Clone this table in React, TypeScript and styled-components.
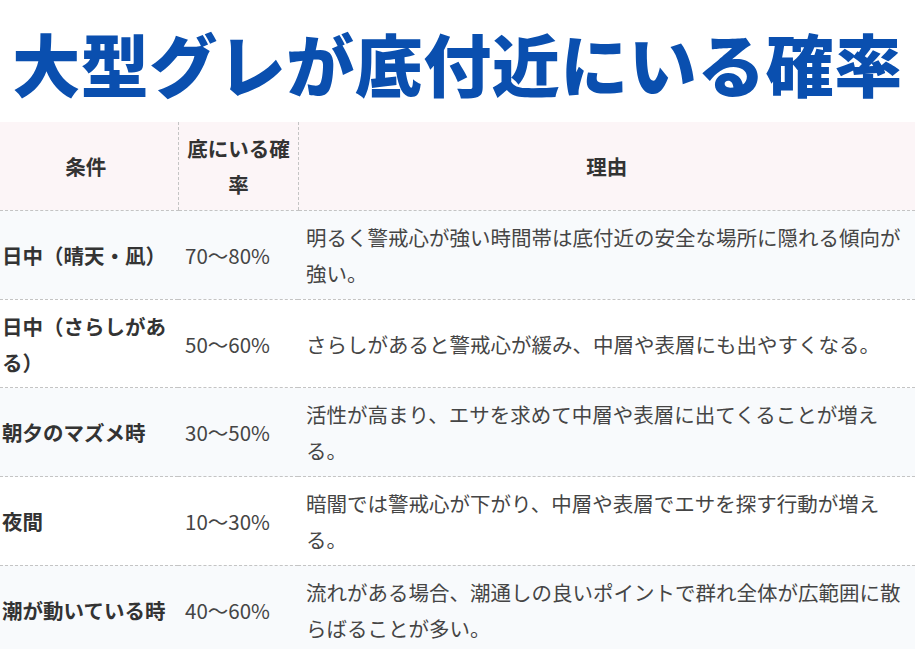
import React from "react";
import styled, { createGlobalStyle } from "styled-components";

const GlobalStyle = createGlobalStyle`
  html, body {
    margin: 0;
    padding: 0;
    background: #ffffff;
    overflow: hidden;
  }
  body {
    font-family: "Noto Sans CJK JP", "Noto Sans", sans-serif;
  }
`;

const rows = [
  {
    cond: "日中（晴天・凪）",
    rate: "70〜80%",
    reason: "明るく警戒心が強い時間帯は底付近の安全な場所に隠れる傾向が強い。",
  },
  {
    cond: "日中（さらしがある）",
    rate: "50〜60%",
    reason: "さらしがあると警戒心が緩み、中層や表層にも出やすくなる。",
  },
  {
    cond: "朝夕のマズメ時",
    rate: "30〜50%",
    reason: "活性が高まり、エサを求めて中層や表層に出てくることが増える。",
  },
  {
    cond: "夜間",
    rate: "10〜30%",
    reason: "暗闇では警戒心が下がり、中層や表層でエサを探す行動が増える。",
  },
  {
    cond: "潮が動いている時",
    rate: "40〜60%",
    reason: "流れがある場合、潮通しの良いポイントで群れ全体が広範囲に散らばることが多い。",
  },
];

export default function App() {
  return (
    <>
      <GlobalStyle />
      <Page>
        <Title>大型グレが底付近にいる確率</Title>
        <Table>
          <colgroup>
            <col style={{ width: 178 }} />
            <col style={{ width: 120 }} />
            <col />
          </colgroup>
          <thead>
            <tr>
              <HeadCell $first>条件</HeadCell>
              <HeadCell $narrow>底にいる確率</HeadCell>
              <HeadCell>理由</HeadCell>
            </tr>
          </thead>
          <tbody>
            {rows.map((r, i) => (
              <Row key={i} $striped={i % 2 === 0}>
                <CondCell>{r.cond}</CondCell>
                <RateCell>{r.rate}</RateCell>
                <ReasonCell>{r.reason}</ReasonCell>
              </Row>
            ))}
          </tbody>
        </Table>
      </Page>
    </>
  );
}

const Page = styled.div`
  width: 915px;
  height: 649px;
  overflow: hidden;
`;

const Title = styled.h1`
  margin: 0 0 14px;
  padding-top: 18px;
  font-size: 68px;
  line-height: 90px;
  font-weight: 900;
  color: #0a4faf;
  text-align: center;
  white-space: nowrap;
  letter-spacing: 0.5px;
`;

const Table = styled.table`
  width: 915px;
  table-layout: fixed;
  border-collapse: collapse;
  font-size: 20.5px;
  line-height: 36px;
`;

const cellBase = `
  border-bottom: 1px dashed #c4c4c4;
  padding: 8px 8px 7.75px;
  vertical-align: middle;
  & + & {
    border-left: 1px dashed #c4c4c4;
  }
`;

const HeadCell = styled.th<{ $first?: boolean; $narrow?: boolean }>`
  ${cellBase}
  background: #fcf5f7;
  color: #333333;
  font-weight: 700;
  text-align: center;
  padding-left: ${(p) => (p.$first ? "2px" : p.$narrow ? "7px" : "8px")};
  padding-right: ${(p) => (p.$narrow ? "6px" : "8px")};
`;

const Row = styled.tr<{ $striped: boolean }>`
  background: ${(p) => (p.$striped ? "#f8fafc" : "#ffffff")};
`;

const CondCell = styled.td`
  ${cellBase}
  padding-left: 2px;
  font-weight: 700;
  color: #333333;
`;

const RateCell = styled.td`
  ${cellBase}
  padding-left: 7px;
  padding-right: 6px;
  color: #454545;
`;

const ReasonCell = styled.td`
  ${cellBase}
  color: #454545;
`;
